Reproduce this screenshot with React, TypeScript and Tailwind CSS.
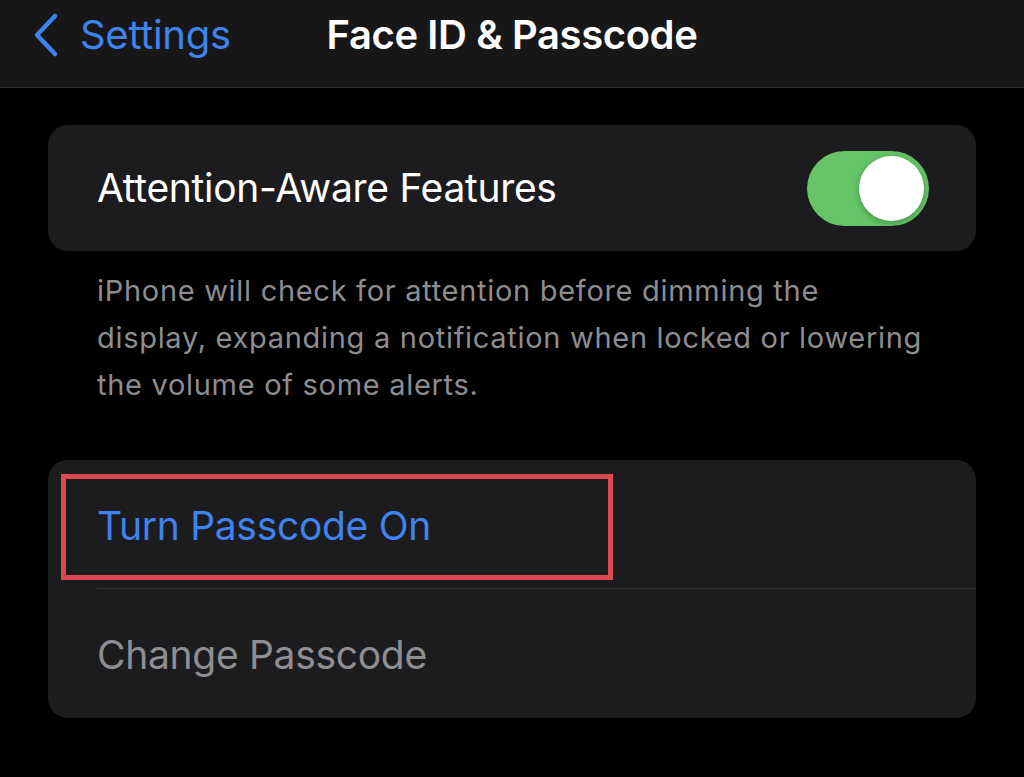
import React, { useState } from "react";

function Toggle({ on, onChange }: { on: boolean; onChange: () => void }) {
    return (
        <button
            onClick={onChange}
            className={`flex h-[75px] w-[122px] shrink-0 items-center rounded-full p-[5px] ${
                on ? "justify-end bg-[#64c466]" : "justify-start bg-[#39393d]"
            }`}>
            <span className="block h-[65px] w-[65px] rounded-full bg-white shadow-[0_2px_6px_rgba(0,0,0,0.25)]" />
        </button>
    );
}

export default function App() {
    const [aware, setAware] = useState(true);

    return (
        <div className="h-[777px] w-full overflow-hidden bg-black font-['Inter','Liberation_Sans',sans-serif] antialiased">
            {/* 導覽列 */}
            <div className="grid h-[88px] grid-cols-[1fr_auto_1fr] items-center border-b border-[#2a2a2a] bg-[#171717] pb-[18px]">
                <button className="flex items-center gap-[20px] pl-[32px] text-[#3e83ef]">
                    <svg width="28" height="46" viewBox="0 0 28 46" fill="none">
                        <path
                            d="M23 4 L5 23 L23 42"
                            stroke="currentColor"
                            strokeWidth="4.5"
                            strokeLinecap="round"
                            strokeLinejoin="round"
                        />
                    </svg>
                    <span className="text-[40px] leading-none tracking-[-0.3px]">Settings</span>
                </button>
                <h1 className="text-[40px] font-semibold leading-none tracking-[-0.4px] text-white">
                    Face ID &amp; Passcode
                </h1>
                <div />
            </div>

            <div className="px-[48px] pt-[37px]">
                <div className="flex h-[126px] items-center justify-between rounded-[20px] bg-[#1c1c1e] pl-[49px] pr-[47px]">
                    <span className="text-[39px] tracking-[-0.3px] text-white">Attention-Aware Features</span>
                    <Toggle on={aware} onChange={() => setAware(!aware)} />
                </div>

                <p className="whitespace-nowrap pl-[49px] pt-[16px] text-[29px] leading-[47px] tracking-[0.7px] text-[#8d8d90]">
                    iPhone will check for attention before dimming the
                    <br />
                    display, expanding a notification when locked or lowering
                    <br />
                    the volume of some alerts.
                </p>

                <div className="mt-[52px] rounded-[20px] bg-[#1c1c1e]">
                    <div className="relative flex h-[128px] items-center pl-[49px] pt-[4px]">
                        <span className="text-[39px] tracking-[-0.3px] text-[#3e83ef]">Turn Passcode On</span>
                        {/* 標註框 */}
                        <div className="pointer-events-none absolute left-[13px] top-[14px] h-[106px] w-[552px] border-[5px] border-[#db4a52]" />
                    </div>
                    <div className="ml-[49px] h-px bg-[#333335]" />
                    <div className="flex h-[129px] items-center pl-[49px] pt-[4px]">
                        <span className="text-[39px] tracking-[-0.3px] text-[#8e8e93]">Change Passcode</span>
                    </div>
                </div>
            </div>
        </div>
    );
}
